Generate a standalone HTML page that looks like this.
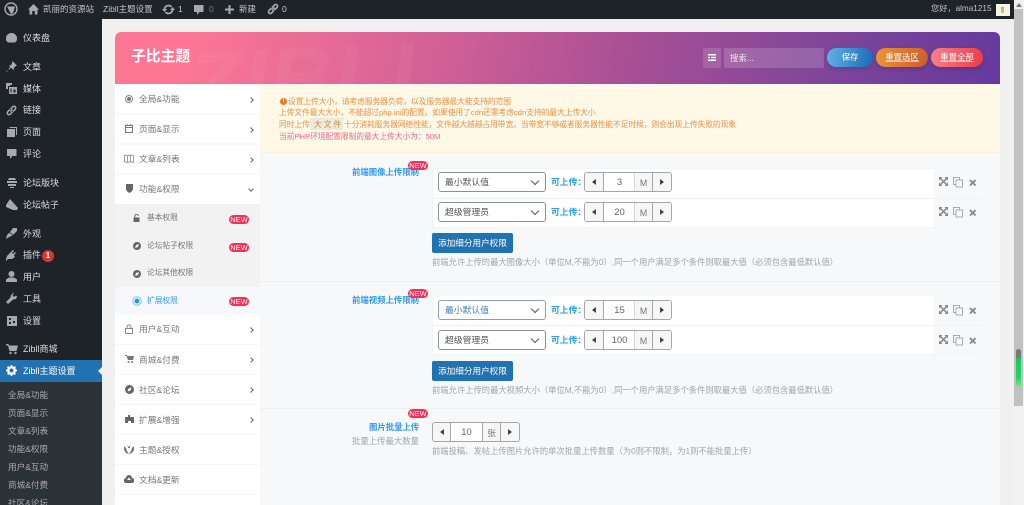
<!DOCTYPE html>
<html lang="zh"><head><meta charset="utf-8"><title>Zibll主题设置</title>
<style>
*{box-sizing:border-box}
html,body{margin:0;padding:0;width:1024px;height:505px;overflow:hidden;background:#f0f0f1}
body{position:relative;font-family:"Liberation Sans","Noto Sans CJK SC",sans-serif;font-size:9px;color:#555}
#w{position:absolute;left:0;top:0;width:1024px;height:505px;overflow:hidden;filter:blur(.35px)}
.a,.t{position:absolute}
.t{white-space:nowrap;line-height:12px;height:12px}
svg.i{position:absolute;display:block}
.bar{left:0;top:0;width:1014px;height:19px;background:#1d2327}
.bar .t{color:#c3c4c7;font-size:8.5px;top:3px}
.side{left:0;top:19px;width:102px;height:486px;background:#1d2327}
.m{color:#dcdcde;font-size:9px;left:23px}
.s{color:#a7aaad;font-size:8.6px;left:8px}
.n{color:#777;font-size:8.7px;left:139px}
.sub{color:#777;font-size:7.7px;left:147px}
.ar{position:absolute;left:249px;width:4px;height:4px;border-top:1px solid #666;border-right:1px solid #666;transform:rotate(45deg)}
.new{position:absolute;width:20px;height:9px;border-radius:5px;background:#fb2d55;color:#fff;font-size:7.5px;line-height:9px;text-align:center}
.lbl{color:#2f9bf0;font-weight:bold;font-size:8.4px}
.sel{position:absolute;left:438px;width:108px;height:20px;background:#fff;border:1px solid #8c8f94;border-radius:3px;font-size:8.8px;line-height:18px;padding-left:6px;color:#555}
.sel:after{content:"";position:absolute;right:7px;top:5px;width:5px;height:5px;border-right:1px solid #50575e;border-bottom:1px solid #50575e;transform:rotate(45deg)}
.up{position:absolute;left:551px;color:#2f9bf0;font-weight:bold;font-size:8.8px;line-height:12px;white-space:nowrap}
.sp{position:absolute;height:20px;background:#fff;border:1px solid #a4a6aa;border-radius:3px;overflow:hidden}
.sp b{position:absolute;top:0;height:18px;background:#f6f6f6;font-weight:normal;color:#777;text-align:center;line-height:20px;font-size:8.8px}
.sp i{position:absolute;top:0;height:18px;text-align:center;line-height:20px;font-style:normal;font-size:9.5px;color:#666}
.tri-l,.tri-r{position:absolute;top:6px;width:0;height:0;border-top:3px solid transparent;border-bottom:3px solid transparent}
.tri-l{border-right:4px solid #444}.tri-r{border-left:4px solid #444}
.btn{position:absolute;left:432px;width:81px;height:20px;background:#2271b1;border-radius:2px;color:#fff;font-size:8.6px;line-height:20px;text-align:center}
.help{color:#a0a3a8;font-size:8.3px;left:432px}
.grp{position:absolute;left:432px;width:551px;height:60px;background:#fff;border:1px solid #f3f4f6}
.tool{position:absolute;left:501px;top:0;width:49px;height:58px;background:#f7f8fa}
.hd{position:absolute;top:48px;height:19px;border-radius:10px;color:#fff;font-size:8.4px;line-height:19px;text-align:center}
.ul{text-decoration:underline;text-decoration-color:rgba(255,255,255,.55)}
.ic{fill:#a7aaad}
.nt{color:#f29045;font-size:7.7px}
</style></head><body>

<svg width="0" height="0" style="position:absolute"><defs>
<g id="tools" fill="#888" stroke="#888"><path fill="none" stroke-width="1.500" d="M1.500 1.500l6 6M7.500 1.500l-6 6"/><path stroke="none" d="M0 0h3.500L0 3.500zM9 0v3.500L5.500 0zM0 9V5.500L3.500 9zM9 9H5.500L9 5.500z"/></g>
<g id="copy" fill="none" stroke="#aaa" stroke-width="1"><path d="M.5.5h6v7h-6z"/><path d="M3 3h6.500v7H3z" fill="#f7f8fa"/></g>
<g id="x" fill="none" stroke="#888" stroke-width="1.900"><path d="M1 1l5.500 5.500M6.500 1L1 6.500"/></g>
</defs></svg>

<div id="w">
<!-- page bg + scrollbar -->
<div class="a" style="left:1014px;top:0;width:10px;height:505px;background:#f1f1f1"></div>
<div class="a" style="left:1014px;top:9px;width:9px;height:397px;background:#c1c1c1"></div>
<div class="a" style="left:1016px;top:349px;width:5px;height:38px;border-radius:3px;background:linear-gradient(#777 0,#777 22%,#1fc35f 25%,#22d36a 75%,#7be87f 100%)"></div>
<div class="a" style="left:1016px;top:3px;width:0;height:0;border-left:3px solid transparent;border-right:3px solid transparent;border-bottom:4px solid #777"></div>

<!-- admin bar -->
<div class="a bar">
<svg class="i" style="left:4px;top:2px" width="14" height="14" viewBox="0 0 14 14"><circle cx="7" cy="7" r="6" fill="none" stroke="#a7aaad" stroke-width="1.400"/><path d="M3 4.500h3.500L9 11 7 12zM6.500 4.500h4.500L9 11z" fill="#a7aaad"/></svg>
<svg class="i" style="left:28px;top:4px" width="11" height="11" viewBox="0 0 11 11"><path class="ic" d="M5.500 0L11 5.500H9.500V10.500H6.800V7H4.200v3.500H1.500V5.500H0z"/></svg>
<span class="t" style="left:43px">凯丽的资源站</span>
<span class="t" style="left:103px">Zibll主题设置</span>
<svg class="i" style="left:162px;top:4px" width="13" height="11" viewBox="0 0 13 11"><path d="M2.500 5.500a4 4 0 0 1 7-2.600M10.500 5.500a4 4 0 0 1-7 2.600" fill="none" stroke="#a7aaad" stroke-width="1.800"/><path class="ic" d="M0 5h5L2.500 8zM8 6h5l-2.500-3z"/></svg>
<span class="t" style="left:178px">1</span>
<svg class="i" style="left:194px;top:5px" width="10" height="10" viewBox="0 0 10 10"><path class="ic" d="M0 0h9.500v7H5.500L3 10V7H0z"/></svg>
<span class="t" style="left:209px;color:#787c82">0</span>
<svg class="i" style="left:225px;top:5px" width="9" height="9" viewBox="0 0 9 9"><path class="ic" d="M3.500 0h2v3.500H9v2H5.500V9h-2V5.500H0v-2h3.500z"/></svg>
<span class="t" style="left:239px">新建</span>
<svg class="i" style="left:267px;top:3px" width="12" height="12" viewBox="0 0 12 12"><path d="M5 7l2.500-2.500M4.500 5L2 7.500a1.700 1.700 0 0 0 2.500 2.500L7 7.500M5 4.500L7.500 2A1.700 1.700 0 0 1 10 4.500L7.500 7" fill="none" stroke="#a7aaad" stroke-width="1.600"/></svg>
<span class="t" style="left:282px">0</span>
<span class="t" style="left:931px;font-size:8.2px">您好，alma1215</span>
<div class="a" style="left:996px;top:4px;width:14px;height:12px;background:#f3f3ee"><div class="a" style="left:5px;top:3px;width:3px;height:6px;background:linear-gradient(#e6a23c,#dcc05a)"></div></div>
</div>

<!-- sidebar -->
<div class="a side"></div>
<div class="a" style="left:0;top:360px;width:102px;height:22px;background:#2271b1"></div>
<div class="a" style="left:0;top:382px;width:102px;height:123px;background:#2c3338"></div>
<div class="a" style="left:98px;top:366px;width:0;height:0;border-top:5px solid transparent;border-bottom:5px solid transparent;border-right:5px solid #f0f0f1"></div>

<svg class="i" style="left:6px;top:33px" width="11" height="10" viewBox="0 0 11 10"><path class="ic" d="M5.500 0a5.500 5.500 0 0 1 5 8L9 9.500H2L.5 8a5.500 5.500 0 0 1 5-8z"/></svg>
<svg class="i" style="left:6px;top:61px" width="11" height="11" viewBox="0 0 11 11"><path class="ic" d="M6.500 0L11 4.500 9.800 5l-2 2 .2 2L6.500 8 4 6 1 10.500 0 11l.5-1L5 7 3 4.500l2-.2 1-2z"/></svg>
<svg class="i" style="left:6px;top:83px" width="11" height="11" viewBox="0 0 11 11"><path class="ic" d="M0 0h6v2H4v1H2v3H0zM3 4h8v7H3zm1.500 1.500v4h1v-4zm3 1v3h2v-3z" fill-rule="evenodd"/></svg>
<svg class="i" style="left:6px;top:105px" width="11" height="11" viewBox="0 0 11 11"><path d="M4.500 6.500l2-2M4 4.500L1.800 6.700a1.600 1.600 0 0 0 2.500 2.500L6.500 7M4.500 4L6.700 1.800a1.600 1.600 0 0 1 2.500 2.500L7 6.500" fill="none" stroke="#a7aaad" stroke-width="1.500"/></svg>
<svg class="i" style="left:7px;top:127px" width="10" height="10" viewBox="0 0 10 10"><path class="ic" d="M2.500 0H10v8H9V1H2.500zM0 2h8v8H0z"/></svg>
<svg class="i" style="left:7px;top:149px" width="10" height="10" viewBox="0 0 10 10"><path class="ic" d="M0 0h9.500v7H5.500L3 10V7H0z"/></svg>
<svg class="i" style="left:7px;top:178px" width="10" height="10" viewBox="0 0 10 10"><path class="ic" d="M2 0h6l1 2H1zM0 3h10v2H0zM1 6h8v2H1zM3 9h4v1H3z"/></svg>
<svg class="i" style="left:6px;top:199px" width="12" height="11" viewBox="0 0 12 11"><path class="ic" d="M4 0l8 9-1 2H7L0 8V6z"/></svg>
<svg class="i" style="left:6px;top:228px" width="11" height="11" viewBox="0 0 11 11"><path class="ic" d="M11 0v3L7 7 4 4l3-4zM3.500 4.500L6.500 7.500 3 9 0 11l1-4z"/></svg>
<svg class="i" style="left:6px;top:250px" width="11" height="11" viewBox="0 0 11 11"><path class="ic" d="M7 0l1 1-2 2 1 1 2-2 1 1-2 2 1 2-3 2H2L0 11V9l1-3 2-2z"/></svg>
<svg class="i" style="left:6px;top:271px" width="11" height="11" viewBox="0 0 11 11"><circle class="ic" cx="5.500" cy="3" r="3"/><path class="ic" d="M0 11V8.500L3 6.500h5L11 8.500V11z"/></svg>
<svg class="i" style="left:6px;top:293px" width="11" height="11" viewBox="0 0 11 11"><path class="ic" d="M8 0l-1.500 2L8 4l2-1.500 1 1L10 6 7 6.500 2 11 0 9l4.500-4.500L5 2 7 0z"/></svg>
<svg class="i" style="left:7px;top:316px" width="10" height="10" viewBox="0 0 10 10"><path class="ic" d="M0 0h10v10H0zm2 2v2h2V2zm4 3v2h2V5zM2 6v2h2V6z" fill-rule="evenodd"/></svg>
<svg class="i" style="left:6px;top:343px" width="12" height="12" viewBox="0 0 12 12"><path class="ic" d="M0 1h2.500l.5 1.500h9L10.500 8H3.500L2 2.500H0z"/><circle class="ic" cx="4.500" cy="10" r="1.200"/><circle class="ic" cx="9.500" cy="10" r="1.200"/></svg>
<svg class="i" style="left:6px;top:365px" width="11" height="11" viewBox="0 0 11 11"><circle cx="5.500" cy="5.500" r="3.300" fill="none" stroke="#fff" stroke-width="2.200"/><path d="M5.500 0v11M0 5.500h11M1.600 1.600l7.800 7.800M9.400 1.600L1.600 9.400" stroke="#fff" stroke-width="1.700"/><circle cx="5.500" cy="5.500" r="2" fill="#2271b1"/></svg>

<span class="t m" style="top:32px">仪表盘</span>
<span class="t m" style="top:61px">文章</span>
<span class="t m" style="top:83px">媒体</span>
<span class="t m" style="top:104px">链接</span>
<span class="t m" style="top:126px">页面</span>
<span class="t m" style="top:148px">评论</span>
<span class="t m" style="top:177px">论坛版块</span>
<span class="t m" style="top:199px">论坛帖子</span>
<span class="t m" style="top:228px">外观</span>
<span class="t m" style="top:249px">插件</span>
<div class="a" style="left:42px;top:250px;width:12px;height:12px;border-radius:6px;background:#d63638;color:#fff;font-size:8px;line-height:12px;text-align:center;font-weight:bold">1</div>
<span class="t m" style="top:271px">用户</span>
<span class="t m" style="top:293px">工具</span>
<span class="t m" style="top:315px">设置</span>
<span class="t m" style="top:343px">Zibll商城</span>
<span class="t m" style="top:365px;color:#fff">Zibll主题设置</span>
<span class="t s" style="top:389px">全局&amp;功能</span>
<span class="t s" style="top:407px">页面&amp;显示</span>
<span class="t s" style="top:425px">文章&amp;列表</span>
<span class="t s" style="top:443px">功能&amp;权限</span>
<span class="t s" style="top:461px">用户&amp;互动</span>
<span class="t s" style="top:479px">商城&amp;付费</span>
<span class="t s" style="top:497px">社区&amp;论坛</span>

<!-- panel header -->
<div class="a" style="left:115px;top:32px;width:885px;height:52px;border-radius:6px 6px 0 0;background:linear-gradient(100deg,#fd7795 8%,#dd6696 30%,#a94f96 58%,#7f4699 80%,#653a9e 100%);overflow:hidden">
<div class="t" style="left:72px;top:1px;height:90px;line-height:90px;font-size:88px;font-weight:bold;font-style:italic;color:rgba(255,255,255,.04);letter-spacing:2px;transform:rotate(-3deg)">ZIBLL</div>
</div>
<span class="t" style="left:131px;top:49px;height:17px;line-height:17px;font-size:14.8px;font-weight:bold;color:#fff">子比主题</span>
<div class="a" style="left:703px;top:48px;width:18px;height:20px;border-radius:2px;background:rgba(255,255,255,.14)"></div>
<svg class="i" style="left:708px;top:54px" width="8" height="7" viewBox="0 0 8 7"><path fill="#fff" d="M0 0h8v1.500H0zM0 2.700h2v1.600H0zM3 2.700h5v1.600H3zM0 5.500h8V7H0z"/></svg>
<div class="a" style="left:724px;top:48px;width:100px;height:20px;border-radius:2px;background:rgba(255,255,255,.16)"></div>
<span class="t" style="left:730px;top:52px;color:#f4e6f0;font-size:8.4px">搜索...</span>
<div class="hd" style="left:827px;width:46px;background:linear-gradient(100deg,#62b1e8,#1b6bb6);box-shadow:0 2px 5px rgba(30,60,120,.3)">保存</div>
<div class="hd ul" style="left:876px;width:52px;background:linear-gradient(100deg,#ec9633,#cc5c2e);box-shadow:0 2px 5px rgba(80,30,60,.3)">重置选区</div>
<div class="hd ul" style="left:931px;width:52px;background:linear-gradient(100deg,#f4838a,#ee3b45);box-shadow:0 2px 5px rgba(80,30,60,.3)">重置全部</div>

<!-- nav -->
<div class="a" style="left:115px;top:84px;width:145px;height:421px;background:#fff"></div>
<div class="a" style="left:115px;top:204px;width:145px;height:83px;background:#f2f2f2"></div>
<div class="a" style="left:115px;top:287px;width:145px;height:28px;background:#f6f8fb"></div>
<div class="a" style="left:115px;top:113px;width:145px;height:2px;background:#f9f9f9"></div>
<div class="a" style="left:115px;top:143px;width:145px;height:2px;background:#f9f9f9"></div>
<div class="a" style="left:115px;top:173px;width:145px;height:2px;background:#f9f9f9"></div>
<div class="a" style="left:115px;top:344px;width:145px;height:1px;background:#f7f7f7"></div>
<div class="a" style="left:115px;top:374px;width:145px;height:1px;background:#f7f7f7"></div>
<div class="a" style="left:115px;top:404px;width:145px;height:1px;background:#f7f7f7"></div>
<div class="a" style="left:115px;top:434px;width:145px;height:1px;background:#f7f7f7"></div>
<div class="a" style="left:115px;top:464px;width:145px;height:1px;background:#f7f7f7"></div>
<div class="a" style="left:115px;top:494px;width:145px;height:1px;background:#f7f7f7"></div>

<svg class="i" style="left:125px;top:95px" width="8" height="8" viewBox="0 0 8 8"><circle cx="4" cy="4" r="3.500" fill="none" stroke="#888"/><circle cx="4" cy="4" r="2" fill="#777"/></svg>
<svg class="i" style="left:125px;top:124px" width="8" height="9" viewBox="0 0 8 9"><path d="M.5 1.500h7v7h-7zM.5 3.500h7M2 0v2M6 0v2" fill="none" stroke="#777"/></svg>
<svg class="i" style="left:124px;top:154px" width="10" height="9" viewBox="0 0 10 9"><path d="M.5 1l3 .8 3-.8 3 .8v6.700l-3-.8-3 .8-3-.8zM3.500 2v6M6.500 1v6.500" fill="none" stroke="#888" stroke-width=".8"/></svg>
<svg class="i" style="left:126px;top:184px" width="7" height="9" viewBox="0 0 7 9"><path fill="#666" d="M0 0h7v4.500C7 7 5 8.200 3.500 9 2 8.200 0 7 0 4.500z"/></svg>
<svg class="i" style="left:133px;top:214px" width="7" height="8" viewBox="0 0 7 8"><path d="M1.800 3.500V2a1.700 1.700 0 0 1 3.400 0" fill="none" stroke="#666"/><path fill="#666" d="M.5 3.500h6V8h-6z"/></svg>
<svg class="i" style="left:133px;top:242px" width="8" height="8" viewBox="0 0 8 8"><circle cx="4" cy="4" r="4" fill="#666"/><path d="M2 6l1-3 3-1-1 3z" fill="#f2f2f2"/></svg>
<svg class="i" style="left:133px;top:270px" width="8" height="8" viewBox="0 0 8 8"><circle cx="4" cy="4" r="4" fill="#666"/><path d="M2 6l1-3 3-1-1 3z" fill="#f2f2f2"/></svg>
<svg class="i" style="left:132px;top:296px" width="10" height="10" viewBox="0 0 10 10"><circle cx="5" cy="5" r="4.300" fill="#cfe9ff" stroke="#7cc4fa" stroke-width=".8"/><circle cx="5" cy="5" r="2.300" fill="#2196f3"/></svg>
<svg class="i" style="left:125px;top:324px" width="8" height="10" viewBox="0 0 8 10"><path d="M2 4.500V3a2 2 0 0 1 4 0v1.500M.5 4.500h7v5h-7z" fill="none" stroke="#888"/></svg>
<svg class="i" style="left:125px;top:355px" width="9" height="8" viewBox="0 0 9 8"><path fill="#777" d="M0 0h2l.4 1H9L8 5H3L1.500 1H0z"/><circle fill="#777" cx="3.500" cy="7" r="1"/><circle fill="#777" cx="7" cy="7" r="1"/></svg>
<svg class="i" style="left:125px;top:385px" width="9" height="9" viewBox="0 0 9 9"><circle cx="4.500" cy="4.500" r="4.500" fill="#666"/><path d="M2.500 6.500l1-3 3-1-1 3z" fill="#fff"/></svg>
<svg class="i" style="left:125px;top:415px" width="9" height="8" viewBox="0 0 9 8"><path fill="#666" d="M3 0h2v2h4v6H6V6H3v2H0V2h3z"/></svg>
<svg class="i" style="left:124px;top:445px" width="10" height="9" viewBox="0 0 10 9"><path fill="#777" d="M0 1l2 2 1 3 2 3-3-1-2-3zM10 1L8 3 7 6 5 9l3-1 2-3zM3.500 0L5 2 6.500 0 6 3H4z"/></svg>
<svg class="i" style="left:124px;top:475px" width="10" height="8" viewBox="0 0 10 8"><path fill="#666" d="M2.500 8A2.500 2.500 0 0 1 2 3a3 3 0 0 1 6 0 2.500 2.500 0 0 1-.5 5z"/><path fill="#fff" d="M5 2.500L7 5H3z"/></svg>

<span class="t n" style="top:93px">全局&amp;功能</span>
<span class="t n" style="top:123px">页面&amp;显示</span>
<span class="t n" style="top:153px">文章&amp;列表</span>
<span class="t n" style="top:183px">功能&amp;权限</span>
<span class="t sub" style="top:212px">基本权限</span>
<span class="t sub" style="top:240px">论坛帖子权限</span>
<span class="t sub" style="top:267px">论坛其他权限</span>
<span class="t sub" style="top:295px;color:#2f9bf0">扩展权限</span>
<span class="t n" style="top:323px">用户&amp;互动</span>
<span class="t n" style="top:354px">商城&amp;付费</span>
<span class="t n" style="top:384px">社区&amp;论坛</span>
<span class="t n" style="top:414px">扩展&amp;增强</span>
<span class="t n" style="top:444px">主题&amp;授权</span>
<span class="t n" style="top:474px">文档&amp;更新</span>
<i class="ar" style="top:98px"></i><i class="ar" style="top:128px"></i><i class="ar" style="top:158px"></i>
<i class="ar" style="top:187px;transform:rotate(135deg)"></i>
<i class="ar" style="top:328px"></i><i class="ar" style="top:358px"></i><i class="ar" style="top:388px"></i><i class="ar" style="top:418px"></i>
<div class="new" style="left:229px;top:215px">NEW</div>
<div class="new" style="left:229px;top:243px">NEW</div>
<div class="new" style="left:229px;top:297px">NEW</div>

<!-- main -->
<div class="a" style="left:260px;top:84px;width:740px;height:421px;background:#f7f8fa"></div>
<div class="a" style="left:260px;top:85px;width:740px;height:68px;background:#fef8e6;border-bottom:1px solid #fbf1dc"></div>
<div class="a" style="left:280px;top:98px;width:7px;height:7px;border-radius:50%;background:#f0791f;color:#fff;font-size:6px;line-height:7px;text-align:center;font-weight:bold">i</div>
<span class="t nt" style="left:288px;top:96px">设置上传大小，请考虑服务器负荷，以及服务器最大能支持的范围</span>
<span class="t nt" style="left:279px;top:107px">上传文件最大大小，不能超过php.ini的配置。如果使用了cdn还需考虑cdn支持的最大上传大小</span>
<span class="t nt" style="left:279px;top:119px">同时上传</span>
<div class="a" style="left:310px;top:118px;width:33px;height:12px;background:#eeeadb"></div>
<span class="t nt" style="left:314px;top:119px;color:#c9893f;letter-spacing:2px">大文件</span>
<span class="t nt" style="left:344px;top:119px">十分消耗服务器网络性能，文件越大越越占用带宽，当带宽不够或者服务器性能不足时候，则会出现上传失败的现象</span>
<span class="t nt" style="left:279px;top:131px;color:#f9688f">当前PHP环境配置限制的最大上传大小为：50M</span>

<!-- section 1 -->
<span class="t lbl" style="left:352px;top:166px">前端图像上传限制</span>
<div class="new" style="left:408px;top:161px">NEW</div>
<div class="grp" style="top:168px"><div class="tool"></div><div class="a" style="left:0;top:29px;width:549px;height:1px;background:#f0f1f3"></div></div>
<div class="sel" style="top:172px">最小默认值</div>
<span class="up" style="top:176px">可上传：</span>
<div class="sp" style="left:584px;top:172px;width:88px"><b style="left:0;width:19px;border-right:1px solid #a4a6aa"></b><span class="tri-l" style="left:7px"></span><i style="left:19px;width:31px">3</i><b style="left:49px;width:19px;border-left:1px solid #d5d5d5;border-right:1px solid #a4a6aa">M</b><b style="left:68px;width:19px"></b><span class="tri-r" style="left:75px"></span></div>
<div class="sel" style="top:202px">超级管理员</div>
<span class="up" style="top:206px">可上传：</span>
<div class="sp" style="left:584px;top:202px;width:88px"><b style="left:0;width:19px;border-right:1px solid #a4a6aa"></b><span class="tri-l" style="left:7px"></span><i style="left:19px;width:31px">20</i><b style="left:49px;width:19px;border-left:1px solid #d5d5d5;border-right:1px solid #a4a6aa">M</b><b style="left:68px;width:19px"></b><span class="tri-r" style="left:75px"></span></div>
<svg class="i" style="left:939px;top:177px" width="40" height="11" viewBox="0 0 40 11"><use href="#tools"/><use href="#copy" x="14"/><use href="#x" x="30" y="2"/></svg>
<svg class="i" style="left:939px;top:207px" width="40" height="11" viewBox="0 0 40 11"><use href="#tools"/><use href="#copy" x="14"/><use href="#x" x="30" y="2"/></svg>
<div class="btn" style="top:233px">添加细分用户权限</div>
<span class="t help" style="top:256px">前端允许上传的最大图像大小（单位M,不能为0）,同一个用户满足多个条件则取最大值（必须包含最低默认值）</span>
<div class="a" style="left:260px;top:281px;width:740px;height:1px;background:#eeeff1"></div>

<!-- section 2 -->
<span class="t lbl" style="left:352px;top:294px">前端视频上传限制</span>
<div class="new" style="left:408px;top:289px">NEW</div>
<div class="grp" style="top:295px"><div class="tool"></div><div class="a" style="left:0;top:29px;width:549px;height:1px;background:#f0f1f3"></div></div>
<div class="sel" style="top:300px;color:#3c7fc0;border-color:#8aa0b8">最小默认值</div>
<span class="up" style="top:304px">可上传：</span>
<div class="sp" style="left:584px;top:300px;width:88px"><b style="left:0;width:19px;border-right:1px solid #a4a6aa"></b><span class="tri-l" style="left:7px"></span><i style="left:19px;width:31px">15</i><b style="left:49px;width:19px;border-left:1px solid #d5d5d5;border-right:1px solid #a4a6aa">M</b><b style="left:68px;width:19px"></b><span class="tri-r" style="left:75px"></span></div>
<div class="sel" style="top:330px">超级管理员</div>
<span class="up" style="top:334px">可上传：</span>
<div class="sp" style="left:584px;top:330px;width:88px"><b style="left:0;width:19px;border-right:1px solid #a4a6aa"></b><span class="tri-l" style="left:7px"></span><i style="left:19px;width:31px">100</i><b style="left:49px;width:19px;border-left:1px solid #d5d5d5;border-right:1px solid #a4a6aa">M</b><b style="left:68px;width:19px"></b><span class="tri-r" style="left:75px"></span></div>
<svg class="i" style="left:939px;top:305px" width="40" height="11" viewBox="0 0 40 11"><use href="#tools"/><use href="#copy" x="14"/><use href="#x" x="30" y="2"/></svg>
<svg class="i" style="left:939px;top:335px" width="40" height="11" viewBox="0 0 40 11"><use href="#tools"/><use href="#copy" x="14"/><use href="#x" x="30" y="2"/></svg>
<div class="btn" style="top:361px">添加细分用户权限</div>
<span class="t help" style="top:384px">前端允许上传的最大视频大小（单位M,不能为0）,同一个用户满足多个条件则取最大值（必须包含最低默认值）</span>
<div class="a" style="left:260px;top:408px;width:740px;height:1px;background:#eeeff1"></div>

<!-- section 3 -->
<div class="new" style="left:408px;top:409px">NEW</div>
<span class="t lbl" style="left:369px;top:421px">图片批量上传</span>
<span class="t" style="left:352px;top:435px;color:#a0a3a8;font-size:8.4px">批量上传最大数量</span>
<div class="sp" style="left:432px;top:422px;width:88px"><b style="left:0;width:18px;border-right:1px solid #a4a6aa"></b><span class="tri-l" style="left:7px"></span><i style="left:18px;width:31px">10</i><b style="left:49px;width:19px;border-left:1px solid #a4a6aa;border-right:1px solid #a4a6aa">张</b><b style="left:68px;width:19px"></b><span class="tri-r" style="left:75px"></span></div>
<span class="t help" style="top:445px">前端投稿、发帖上传图片允许的单次批量上传数量（为0则不限制，为1则不能批量上传）</span>
</div>
</body></html>
